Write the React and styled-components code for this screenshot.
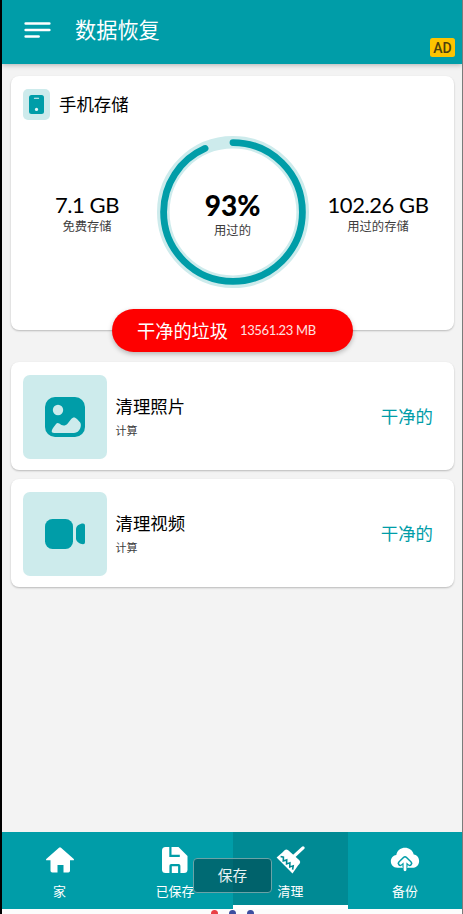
import React from 'react';
import styled, { createGlobalStyle } from 'styled-components';

const TEAL = '#009da8';
const PALE = '#cdebec';

const GlobalStyle = createGlobalStyle`
    * {
        box-sizing: border-box;
    }

    body {
        margin: 0;
        background: #f3f3f3;
        font-family: Lato, "Noto Sans CJK SC", sans-serif;
        color: #000;
    }
`;

const Screen = styled.div`
    position: relative;
    display: flex;
    flex-direction: column;
    width: 463px;
    height: 914px;
    overflow: hidden;
    border-left: 2px solid #000;
    border-right: 1px solid #7b7b7b;
    background: #f3f3f3;
`;

const Header = styled.header`
    position: relative;
    display: flex;
    flex: none;
    align-items: center;
    height: 64px;
    padding: 0 22px 4px;
    background: ${TEAL};
    box-shadow: 0 1px 5px rgba(0, 0, 0, 0.28);
`;

const Title = styled.h1`
    margin: 0 0 0 24px;
    font-size: 21.2px;
    font-weight: 400;
    line-height: 30px;
    color: #fff;
`;

const AdBadge = styled.span`
    position: absolute;
    right: 7px;
    bottom: 7px;
    width: 25px;
    height: 19px;
    border-radius: 2.5px;
    background: #fdc300;
    color: #4e400c;
    font: 500 14px/20px Roboto, sans-serif;
    text-align: center;
`;

const Main = styled.main`
    display: flex;
    flex: 1;
    flex-direction: column;
    padding: 12px 8px 0 9px;
`;

const Card = styled.section`
    border-radius: 8px;
    background: #fff;
    box-shadow: 0 1px 2px rgba(0, 0, 0, 0.24);
`;

const StorageCard = styled(Card)`
    height: 254px;
    padding: 13px 12px 0;
`;

const StorageHead = styled.div`
    display: flex;
    align-items: center;
    height: 31px;
    gap: 9px;
`;

const PhoneTile = styled.div`
    display: flex;
    align-items: center;
    justify-content: center;
    width: 27px;
    height: 31px;
    border-radius: 5px;
    background: ${PALE};
`;

const CardTitle = styled.h2`
    margin: 0;
    font-size: 17.4px;
    font-weight: 400;
    line-height: 24px;
`;

const Usage = styled.div`
    display: grid;
    grid-template-columns: 128px 1fr 128px;
    justify-items: center;
    margin-top: 15.5px;
`;

const Stat = styled.div`
    display: flex;
    flex-direction: column;
    align-items: center;
    padding-top: 55.5px;
    white-space: nowrap;
`;

const StatValue = styled.div`
    font-size: 22px;
    line-height: 27px;
    letter-spacing: -0.45px;
`;

const Caption = styled.div`
    font-size: 12.3px;
    line-height: 18px;
    color: #3c3c3c;
`;

const Ring = styled.div`
    display: grid;
    place-items: center;
    width: 152px;
    height: 152px;

    > * {
        grid-area: 1 / 1;
    }
`;

const RingText = styled.div`
    display: flex;
    flex-direction: column;
    align-items: center;
    padding-top: 5px;
`;

const Percent = styled.div`
    font-size: 28px;
    font-weight: 900;
    line-height: 34px;
`;

const CleanButton = styled.button`
    display: flex;
    flex: none;
    align-self: center;
    align-items: center;
    gap: 12px;
    width: 241px;
    height: 43px;
    margin: -21px 0 10px;
    padding: 0 0 2px 25px;
    border: 0;
    border-radius: 22px;
    background: #fe0000;
    box-shadow: 0 2px 5px rgba(0, 0, 0, 0.26);
    color: #fff;
    font-family: inherit;
    font-size: 18.2px;
    white-space: nowrap;
`;

const Size = styled.span`
    font-size: 13px;
    letter-spacing: -0.35px;
    color: #ffe0e0;
`;

const Row = styled(Card)`
    display: flex;
    align-items: center;
    height: 108px;
    margin-bottom: 9px;
    padding: 1px 21px 0 12px;
`;

const Tile = styled.div`
    display: flex;
    align-items: center;
    justify-content: center;
    width: 84px;
    height: 84px;
    border-radius: 7px;
    background: ${PALE};
`;

const RowText = styled.div`
    flex: 1;
    padding: 2px 0 0 8.5px;
`;

const Small = styled.div`
    margin-top: 2px;
    font-size: 11px;
    line-height: 20px;
    color: #3c3c3c;
`;

const Action = styled.span`
    padding-top: 1px;
    font-size: 17.4px;
    line-height: 24px;
    color: ${TEAL};
`;

const Nav = styled.nav`
    display: grid;
    flex: none;
    grid-template-columns: 115px 116px 115px 114px;
    height: 77px;
`;

const Tab = styled.div`
    display: flex;
    flex-direction: column;
    align-items: center;
    padding-top: 14px;
    border-bottom: ${p => (p.$active ? '4px solid #fff' : '0')};
    background: ${p => (p.$active ? '#008a94' : TEAL)};
    color: #fff;

    svg {
        flex: none;
    }
`;

const TabLabel = styled.span`
    margin-top: 7px;
    font-size: 12.9px;
    line-height: 20px;
`;

const BottomEdge = styled.div`
    flex: none;
    height: 5px;
    background: #fcfcfc;
`;

const Toast = styled.div`
    position: absolute;
    left: 191px;
    top: 858px;
    width: 79px;
    height: 35px;
    border: 1.5px solid #6aa3a7;
    border-radius: 4px;
    background: rgba(0, 75, 83, 0.62);
    color: #e8f4f4;
    font-size: 14.7px;
    line-height: 33px;
    text-align: center;
`;

const Dots = styled.div`
    position: absolute;
    left: 209px;
    top: 910px;
    display: flex;
    gap: 11px;
`;

const Dot = styled.i`
    width: 7px;
    height: 7px;
    border-radius: 50%;
    background: ${p => p.$color};
`;

const MenuIcon = () => (
    <svg width="27" height="18" viewBox="0 0 27 18" stroke="#fff" strokeWidth="2.7" strokeLinecap="round">
        <path d="M1.7 2.5H25.3M1.7 9H25.3M1.7 15.5H14.6" />
    </svg>
);

const PhoneIcon = () => (
    <svg width="15" height="19" viewBox="0 0 15 19">
        <rect width="15" height="19" rx="2.5" fill={TEAL} />
        <path d="M5.4 3.2H9.6" stroke="#e3f5f5" strokeWidth="1.1" strokeLinecap="round" />
        <circle cx="7.5" cy="14.4" r="1.6" fill="#e3f5f5" />
    </svg>
);

const PhotoIcon = () => (
    <svg width="40" height="40" viewBox="0 0 40 40">
        <rect width="40" height="40" rx="10" fill={TEAL} />
        <circle cx="13" cy="13" r="5.2" fill={PALE} />
        <path
            d="M7 33C8 30.5 9.8 28.5 11.2 26.7C12.1 25.6 13.3 25.8 14.3 26.6C17 28.9 20.2 29.4 22.7 26.4L26 22.2C28 19.8 30.1 19.9 32 22.1L35.2 25.6C37.1 28.2 35 36 29 36H9.3C7 36 6.2 35 7 33Z"
            fill={PALE}
        />
    </svg>
);

const VideoIcon = () => (
    <svg width="40" height="30" viewBox="0 0 40 30" fill={TEAL}>
        <rect width="28" height="30" rx="7.5" />
        <path d="M31 10.2C31 6.7 35 4.5 38 4.5Q40 4.5 40 6.5V23.2Q40 25.2 38 25.2C35 25.2 31 22.8 31 19.8Z" />
    </svg>
);

const HomeIcon = () => (
    <svg width="30" height="28" viewBox="0 0 30 28" fill="#fff">
        <path d="M14 1.7Q15 .8 16 1.7L28.5 12.7Q29.8 14.2 28 14.2H25V24.8Q25 26.5 23.3 26.5H18.5V19H12.5V26.5H7.3Q5.5 26.5 5.5 24.8V14.2H2Q.2 14.2 1.5 12.7Z" />
    </svg>
);

const SaveIcon = () => (
    <svg width="28" height="28" viewBox="0 0 28 28">
        <path d="M4.5 1H17.5L26.5 10V23.5Q26.5 27 23 27H4.5Q1 27 1 23.5V4.5Q1 1 4.5 1Z" fill="#fff" />
        <path d="M9.4 .5V9.8H18.8" stroke={TEAL} strokeWidth="2.2" fill="none" />
        <path d="M8.4 27.5V19.8Q8.4 18 10.2 18H17.6Q19.4 18 19.4 19.8V27.5H17.1V20.2H10.8V27.5Z" fill={TEAL} />
    </svg>
);

const BroomIcon = () => (
    <svg width="30" height="28" viewBox="1 1 30 28">
        <path d="M18.4 11.7L28 2.9" stroke="#fff" strokeWidth="3.2" strokeLinecap="round" />
        <path d="M9.6 5.2Q11.3 4 13.2 5.3L24.4 15.2Q26 17 24.6 18.8L23 20.6L17.5 28.4L1.6 12.4L7.4 7.6Z" fill="#fff" />
        <path
            d="M5.6 11.4L8.4 12.2L8.3 15.9L11.7 14.9L11.6 18.9L14.9 17.8L14.8 21.9L18.2 20.8L17.6 24.6"
            stroke="#008a94"
            strokeWidth="1.6"
            fill="none"
        />
    </svg>
);

const CloudIcon = () => (
    <svg width="30" height="28" viewBox="0 0 30 28">
        <path
            d="M7.5 21.8C-.9 21.8-1.4 10 6.3 9C8-.5 21.4-.7 23.7 8.4C31.5 9.5 30.7 21.8 22.5 21.8Z"
            fill="#fff"
        />
        <path d="M15 20V14M10.2 17.4L15 12.7L19.8 17.4" stroke={TEAL} strokeWidth="5.2" strokeLinecap="round" strokeLinejoin="round" fill="none" />
        <path d="M15 23.8V13.4M10.6 17.3L15 13L19.4 17.3" stroke="#fff" strokeWidth="2.8" strokeLinecap="round" strokeLinejoin="round" fill="none" />
    </svg>
);

const UsageRing = () => (
    <svg width="152" height="152" viewBox="0 0 152 152" fill="none">
        <circle cx="76" cy="76" r="69.7" stroke={PALE} strokeWidth="12.6" />
        <circle
            cx="76"
            cy="76"
            r="69.4"
            stroke={TEAL}
            strokeWidth="6.8"
            strokeLinecap="round"
            pathLength="100"
            strokeDasharray="93.4 100"
            transform="rotate(-90 76 76)"
        />
    </svg>
);

const rows = [
    { title: '清理照片', Icon: PhotoIcon },
    { title: '清理视频', Icon: VideoIcon },
];

const tabs = [
    { label: '家', Icon: HomeIcon },
    { label: '已保存', Icon: SaveIcon },
    { label: '清理', Icon: BroomIcon, active: true },
    { label: '备份', Icon: CloudIcon },
];

const App = () => (
    <Screen>
        <GlobalStyle />
        <Header>
            <MenuIcon />
            <Title>数据恢复</Title>
            <AdBadge>AD</AdBadge>
        </Header>
        <Main>
            <StorageCard>
                <StorageHead>
                    <PhoneTile><PhoneIcon /></PhoneTile>
                    <CardTitle>手机存储</CardTitle>
                </StorageHead>
                <Usage>
                    <Stat>
                        <StatValue>7.1 GB</StatValue>
                        <Caption>免费存储</Caption>
                    </Stat>
                    <Ring>
                        <UsageRing />
                        <RingText>
                            <Percent>93%</Percent>
                            <Caption>用过的</Caption>
                        </RingText>
                    </Ring>
                    <Stat>
                        <StatValue>102.26 GB</StatValue>
                        <Caption>用过的存储</Caption>
                    </Stat>
                </Usage>
            </StorageCard>
            <CleanButton>
                干净的垃圾
                <Size>13561.23 MB</Size>
            </CleanButton>
            {rows.map(({ title, Icon }) => (
                <Row key={title}>
                    <Tile><Icon /></Tile>
                    <RowText>
                        <CardTitle>{title}</CardTitle>
                        <Small>计算</Small>
                    </RowText>
                    <Action>干净的</Action>
                </Row>
            ))}
        </Main>
        <Nav>
            {tabs.map(({ label, Icon, active }) => (
                <Tab key={label} $active={active}>
                    <Icon />
                    <TabLabel>{label}</TabLabel>
                </Tab>
            ))}
        </Nav>
        <BottomEdge />
        <Toast>保存</Toast>
        <Dots>
            <Dot $color="#e93f45" />
            <Dot $color="#3c4ea0" />
            <Dot $color="#3c4ea0" />
        </Dots>
    </Screen>
);

export default App;
